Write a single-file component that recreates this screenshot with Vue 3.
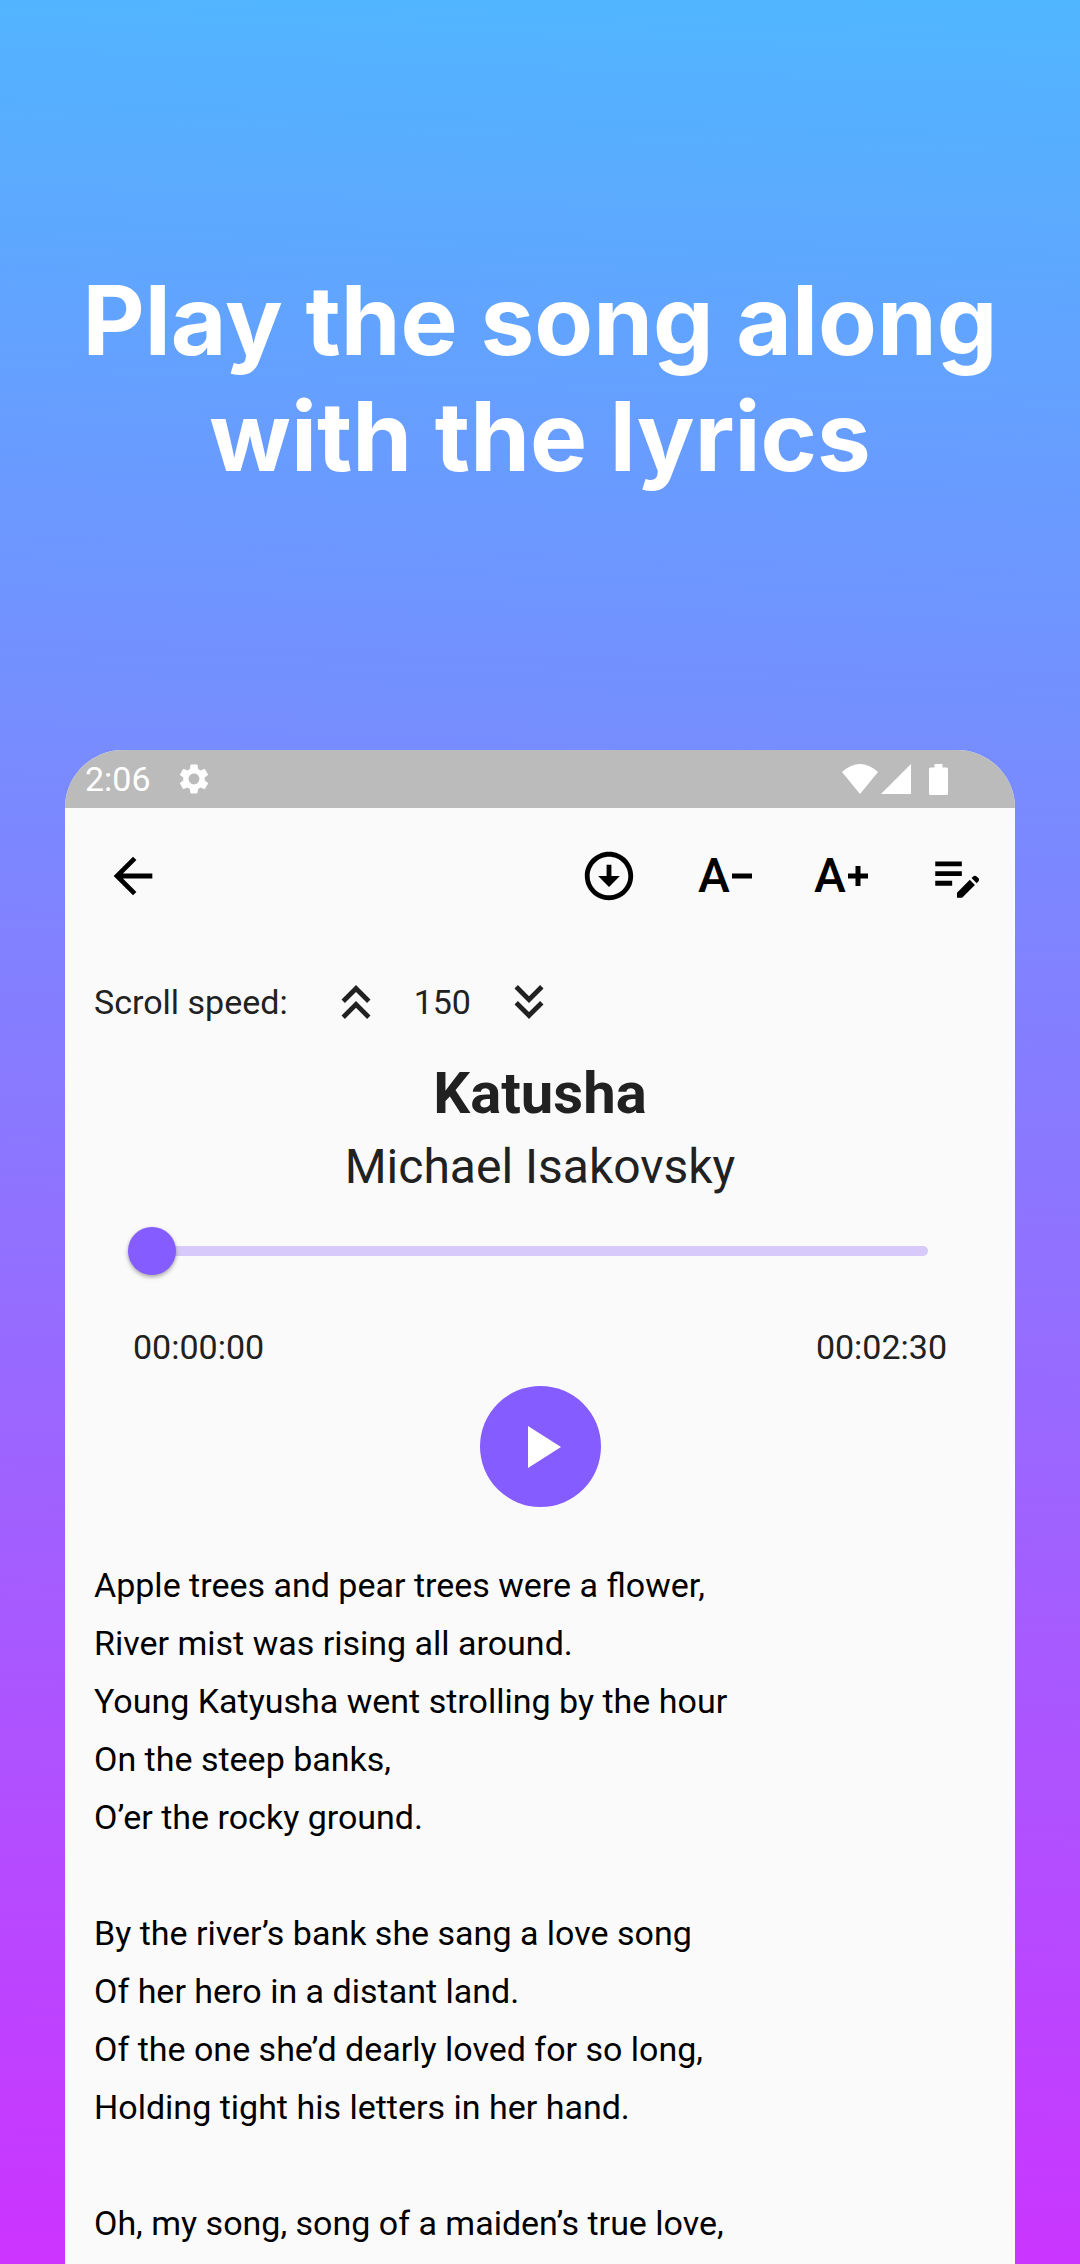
<script setup>
import { ref, computed } from 'vue'

const speed = ref(150)
const position = ref(0)
const duration = 150

const pad = (n) => String(n).padStart(2, '0')
const format = (s) => `${pad(Math.floor(s / 3600))}:${pad(Math.floor(s / 60) % 60)}:${pad(s % 60)}`
const elapsed = computed(() => format(Number(position.value)))

const verses = [
  [
    'Apple trees and pear trees were a flower,',
    'River mist was rising all around.',
    'Young Katyusha went strolling by the hour',
    'On the steep banks,',
    'O’er the rocky ground.',
  ],
  [
    'By the river’s bank she sang a love song',
    'Of her hero in a distant land.',
    'Of the one she’d dearly loved for so long,',
    'Holding tight his letters in her hand.',
  ],
  ['Oh, my song, song of a maiden’s true love,'],
]
</script>

<template>
  <div class="page">
    <h1 class="headline">Play the song along<br />with the lyrics</h1>

    <main class="phone">
      <div class="status">
        <span class="clock">2:06</span>
        <svg class="gear" viewBox="2 2 20 20" aria-hidden="true">
          <path d="M19.14 12.94c.04-.3.06-.61.06-.94 0-.32-.02-.64-.07-.94l2.03-1.58c.18-.14.23-.41.12-.61l-1.92-3.32c-.12-.22-.37-.29-.59-.22l-2.39.96c-.5-.38-1.03-.7-1.62-.94l-.36-2.54c-.04-.24-.24-.41-.48-.41h-3.84c-.24 0-.43.17-.47.41l-.36 2.54c-.59.24-1.13.57-1.62.94l-2.39-.96c-.22-.08-.47 0-.59.22L2.74 8.87c-.12.21-.08.47.12.61l2.03 1.58c-.05.3-.09.63-.09.94s.02.64.07.94l-2.03 1.58c-.18.14-.23.41-.12.61l1.92 3.32c.12.22.37.29.59.22l2.39-.96c.5.38 1.03.7 1.62.94l.36 2.54c.05.24.24.41.48.41h3.84c.24 0 .44-.17.47-.41l.36-2.54c.59-.24 1.13-.56 1.62-.94l2.39.96c.22.08.47 0 .59-.22l1.92-3.32c.12-.22.07-.47-.12-.61l-2.01-1.58zM12 15.6c-1.98 0-3.6-1.62-3.6-3.6s1.62-3.6 3.6-3.6 3.6 1.62 3.6 3.6-1.62 3.6-3.6 3.6z" />
        </svg>
        <div class="indicators">
          <svg class="wifi" viewBox="0 0 36 30" aria-hidden="true"><path d="M18 30 0 8Q18-8 36 8Z" /></svg>
          <svg class="signal" viewBox="0 0 30 30" aria-hidden="true"><path d="M0 30 30 0v30z" /></svg>
          <svg class="battery" viewBox="0 0 19 31" aria-hidden="true"><path d="M5.500 0h8v3.500H17.500A1.500 1.500 0 0 1 19 5v24.500a1.500 1.500 0 0 1-1.500 1.500h-16A1.500 1.500 0 0 1 0 29.500V5a1.500 1.500 0 0 1 1.500-1.500h4z" /></svg>
        </div>
      </div>

      <header class="toolbar">
        <button class="back" type="button" aria-label="Back">
          <svg class="icon" viewBox="0 0 24 24"><path d="M20 11H7.830l5.590-5.590L12 4l-8 8 8 8 1.410-1.410L7.830 13H20v-2z" /></svg>
        </button>
        <button class="action" type="button" aria-label="Download">
          <svg class="icon" viewBox="0 0 24 24">
            <path d="M12 4c4.410 0 8 3.590 8 8s-3.590 8-8 8-8-3.590-8-8 3.590-8 8-8m0-2C6.480 2 2 6.480 2 12s4.480 10 10 10 10-4.480 10-10S17.520 2 12 2zm1 10V7.300h-2V12H7.500l4.500 4.600L16.500 12z" />
          </svg>
        </button>
        <button class="action" type="button" aria-label="Decrease text size">
          <span class="letter">A</span>
          <svg class="sign" viewBox="0 0 20 20"><path d="M0 7.500h20v5H0z" /></svg>
        </button>
        <button class="action" type="button" aria-label="Increase text size">
          <span class="letter">A</span>
          <svg class="sign" viewBox="0 0 20 20"><path d="M0 7.500h7.500V0h5v7.500H20v5h-7.500V20h-5v-7.500H0z" /></svg>
        </button>
        <button class="action" type="button" aria-label="Edit lyrics">
          <svg class="icon" viewBox="0 0 24 24">
            <path d="M3 10h11v2H3v-2zm0-2h11V6H3v2zm0 8h7v-2H3v2zm15.010-3.130.71-.71c.39-.39 1.020-.39 1.410 0l.71.71c.39.39.39 1.020 0 1.410l-.71.71-2.120-2.120zm-.71.71-5.300 5.300V21h2.120l5.300-5.300-2.120-2.120z" />
          </svg>
        </button>
      </header>

      <div class="speed">
        <span class="speed-label">Scroll speed:</span>
        <button class="action" type="button" aria-label="Faster" @click="speed += 10">
          <svg class="icon" viewBox="0 0 24 24"><path d="M6 17.590 7.410 19 12 14.420 16.590 19 18 17.590l-6-6zM6 11l1.410 1.410L12 7.830l4.590 4.580L18 11l-6-6z" /></svg>
        </button>
        <output>{{ speed }}</output>
        <button class="action" type="button" aria-label="Slower" @click="speed -= 10">
          <svg class="icon" viewBox="0 0 24 24"><path d="M18 6.410 16.590 5 12 9.580 7.410 5 6 6.410l6 6zM18 13l-1.410-1.410L12 16.170l-4.590-4.580L6 13l6 6z" /></svg>
        </button>
      </div>

      <h2 class="title">Katusha</h2>
      <p class="author">Michael Isakovsky</p>

      <section class="player">
        <input v-model="position" class="seek" type="range" min="0" :max="duration" aria-label="Playback position" />
        <div class="times">
          <span>{{ elapsed }}</span>
          <span>{{ format(duration) }}</span>
        </div>
        <button class="play" type="button" aria-label="Play">
          <svg viewBox="0 0 24 24"><path d="M8 5v14l11-7z" /></svg>
        </button>
      </section>

      <article class="lyrics">
        <p v-for="(verse, i) in verses" :key="i">
          <span v-for="line in verse" :key="line" class="line">{{ line }}</span>
        </p>
      </article>
    </main>
  </div>
</template>

<style>
body {
  margin: 0;
}
</style>

<style scoped>
.page {
  box-sizing: border-box;
  min-height: 100vh;
  display: flex;
  flex-direction: column;
  background: linear-gradient(182deg, #50b6ff 0%, #8a78ff 50%, #cc33ff 100%);
  font-family: Roboto, "Liberation Sans", sans-serif;
  font-size: 34px;
  line-height: 40px;
  color: #212121;
}

h1,
h2,
p {
  margin: 0;
}

svg {
  display: block;
  flex: none;
  fill: currentColor;
}

button {
  display: flex;
  align-items: center;
  justify-content: center;
  padding: 0;
  border: 0;
  background: none;
  color: inherit;
  font: inherit;
  cursor: pointer;
}

.headline {
  padding: 262px 24px 256px;
  font-family: Inter, "Liberation Sans", sans-serif;
  font-size: 96px;
  font-weight: 700;
  line-height: 116px;
  text-align: center;
  color: #fff;
}

.phone {
  flex: 1;
  margin: 0 65px;
  border-radius: 58px 58px 0 0;
  overflow: hidden;
  background: #fafafa;
}

.status {
  display: flex;
  align-items: center;
  height: 58px;
  padding: 0 67px 0 20px;
  background: #bbb;
  color: #fff;
}

.clock {
  line-height: 42px;
}

.gear {
  width: 30px;
  height: 30px;
  margin-left: 28px;
}

.indicators {
  display: flex;
  align-items: center;
  margin-left: auto;
}

.wifi {
  width: 36px;
  height: 30px;
}

.signal {
  width: 30px;
  height: 30px;
  margin: 0 18px 0 3px;
}

.battery {
  width: 19px;
  height: 31px;
}

.toolbar {
  display: flex;
  height: 136px;
  color: #000;
}

.back {
  width: 136px;
  margin-right: auto;
}

.action {
  width: 116px;
}

.icon {
  width: 58px;
  height: 58px;
}

.letter {
  font-size: 48px;
  font-weight: 500;
  line-height: 56px;
}

.sign {
  width: 20px;
  height: 20px;
  margin-left: 2px;
}

.speed {
  display: flex;
  align-items: center;
  height: 116px;
  padding-left: 29px;
}

.speed .action {
  height: 116px;
}

.speed-label {
  margin-right: 10px;
}

.title {
  font-size: 58px;
  font-weight: 700;
  line-height: 66px;
  text-align: center;
}

.author {
  margin-top: 13px;
  font-size: 48px;
  line-height: 56px;
  text-align: center;
}

.player {
  display: flex;
  flex-direction: column;
  align-items: center;
  padding: 0 63px;
}

.seek {
  appearance: none;
  align-self: stretch;
  height: 48px;
  margin: 32px 24px 0 0;
  background: none;
  cursor: pointer;
}

.seek::-webkit-slider-runnable-track {
  height: 10px;
  border-radius: 5px;
  background: #d7cafb;
}

.seek::-webkit-slider-thumb {
  appearance: none;
  width: 48px;
  height: 48px;
  margin-top: -19px;
  border-radius: 50%;
  background: #855cff;
  box-shadow: 0 2px 4px rgba(0, 0, 0, 0.35);
}

.times {
  align-self: stretch;
  display: flex;
  justify-content: space-between;
  margin: 52px 5px 19px;
}

.play {
  width: 121px;
  height: 121px;
  border-radius: 50%;
  background: #855cff;
  color: #fff;
}

.play svg {
  width: 72px;
  height: 72px;
}

.lyrics {
  display: flex;
  flex-direction: column;
  gap: 58px;
  padding: 49px 29px 0;
  line-height: 58px;
  color: #000;
}

.line {
  display: block;
}
</style>
